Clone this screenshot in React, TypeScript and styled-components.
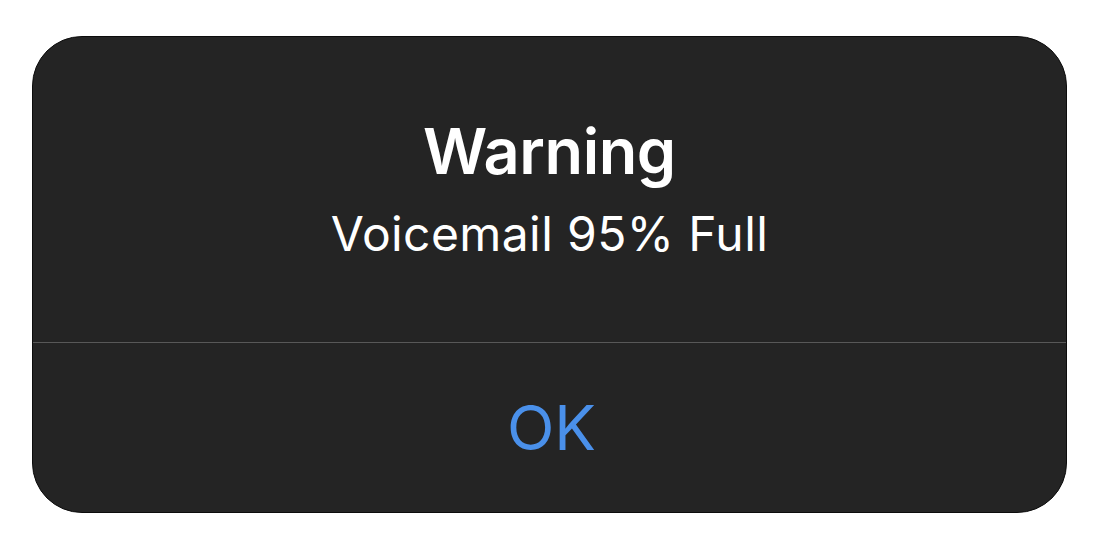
import React from "react";
import styled, { createGlobalStyle } from "styled-components";

const GlobalStyle = createGlobalStyle`
  html, body {
    margin: 0;
    padding: 0;
    background: #ffffff;
  }

  body {
    font-family: Inter, "Noto Sans", "Liberation Sans", sans-serif;
    -webkit-font-smoothing: antialiased;
  }
`;

const Page = styled.main`
  width: 1100px;
  height: 547px;
  padding: 36px 0 0 32px;
  box-sizing: border-box;
`;

const AlertBox = styled.section`
  width: 1035px;
  height: 477px;
  box-sizing: border-box;
  background: #242424;
  border: 1px solid #0c0c0c;
  border-radius: 50px;
  display: flex;
  flex-direction: column;
  overflow: hidden;
`;

const Body = styled.div`
  height: 306px;
  box-sizing: border-box;
  padding-top: 75px;
  display: flex;
  flex-direction: column;
  align-items: center;
  border-bottom: 1.5px solid #585858;
`;

const Title = styled.h2`
  margin: 0;
  font-size: 63px;
  line-height: 78px;
  font-weight: 600;
  color: #ffffff;
  letter-spacing: -0.4px;
`;

const Message = styled.p`
  margin: 14px 0 0;
  font-size: 48px;
  line-height: 60px;
  font-weight: 400;
  color: #ffffff;
  letter-spacing: 0.4px;
`;

const Action = styled.button`
  flex: 1;
  border: none;
  background: transparent;
  color: #4a90ea;
  font-family: inherit;
  font-size: 62px;
  font-weight: 400;
  padding: 0 0 0 4px;
  cursor: pointer;
`;

export default function App() {
  return (
    <>
      <GlobalStyle />
      <Page>
        <AlertBox role="alertdialog">
          <Body>
            <Title>Warning</Title>
            <Message>Voicemail 95% Full</Message>
          </Body>
          <Action>OK</Action>
        </AlertBox>
      </Page>
    </>
  );
}
